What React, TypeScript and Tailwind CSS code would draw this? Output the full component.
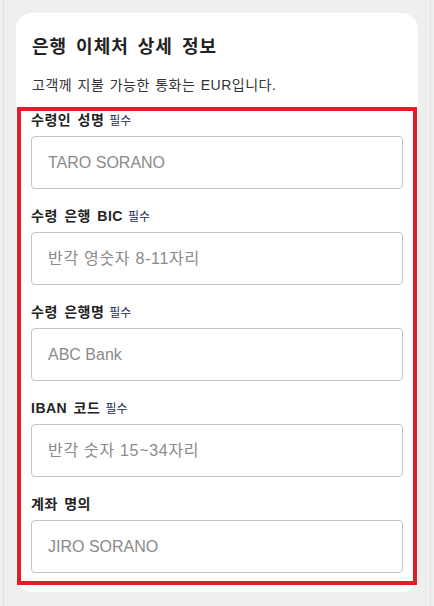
const fields = [
  { label: '수령인 성명', required: true, placeholder: 'TARO SORANO', hangul: false },
  { label: '수령 은행 BIC', required: true, placeholder: '반각 영숫자 8-11자리', hangul: true },
  { label: '수령 은행명', required: true, placeholder: 'ABC Bank', hangul: false },
  { label: 'IBAN 코드', required: true, placeholder: '반각 숫자 15~34자리', hangul: true },
  { label: '계좌 명의', required: false, placeholder: 'JIRO SORANO', hangul: false },
];

export default function App() {
  return (
    <div
      className="min-h-[606px] bg-[#efefef] px-[3px]"
      style={{ fontFamily: '"Liberation Sans", "Noto Sans CJK KR", sans-serif' }}
    >
      <div className="min-h-[606px] border-x border-[#e2e2e2] px-[12px] pt-[13px] pb-[14px]">
        <div className="rounded-2xl bg-white pt-[21px] pb-[7px]">
          <h2 className="px-4 text-[18px] leading-[26px] font-bold tracking-[1px] text-[#222] [word-spacing:3px]">
            은행 이체처 상세 정보
          </h2>
          <p className="mt-[15px] px-4 text-[14px] leading-[20px] tracking-[0.5px] text-[#333] [word-spacing:1px]">
            고객께 지불 가능한 통화는 EUR입니다.
          </p>

          {/* fields */}
          <div className="mx-[1px] mt-[12px] border-4 border-[#e31c25] px-[10px] pb-[8px]">
            {fields.map((f, i) => (
              <div key={f.label} className={i === 0 ? '' : 'mt-[18px]'}>
                <div className="flex h-[18px] items-center gap-[5px] text-[14px] leading-[18px] font-bold tracking-[0.5px] text-[#222] [word-spacing:2px]">
                  <span>{f.label}</span>
                  {f.required && <span className="pt-[1px] text-[12px] leading-[18px] font-normal tracking-normal text-[#1b2a5c]">필수</span>}
                </div>
                <div className="mt-[7px] flex h-[53px] items-center rounded-[4px] border border-[#c4c4c4] px-4">
                  <span className={f.hangul ? 'text-[16px] tracking-[0.7px] text-[#8a8a8a]' : 'text-[16px] text-[#8a8a8a]'}>
                    {f.placeholder}
                  </span>
                </div>
              </div>
            ))}
          </div>
        </div>
      </div>
    </div>
  );
}
